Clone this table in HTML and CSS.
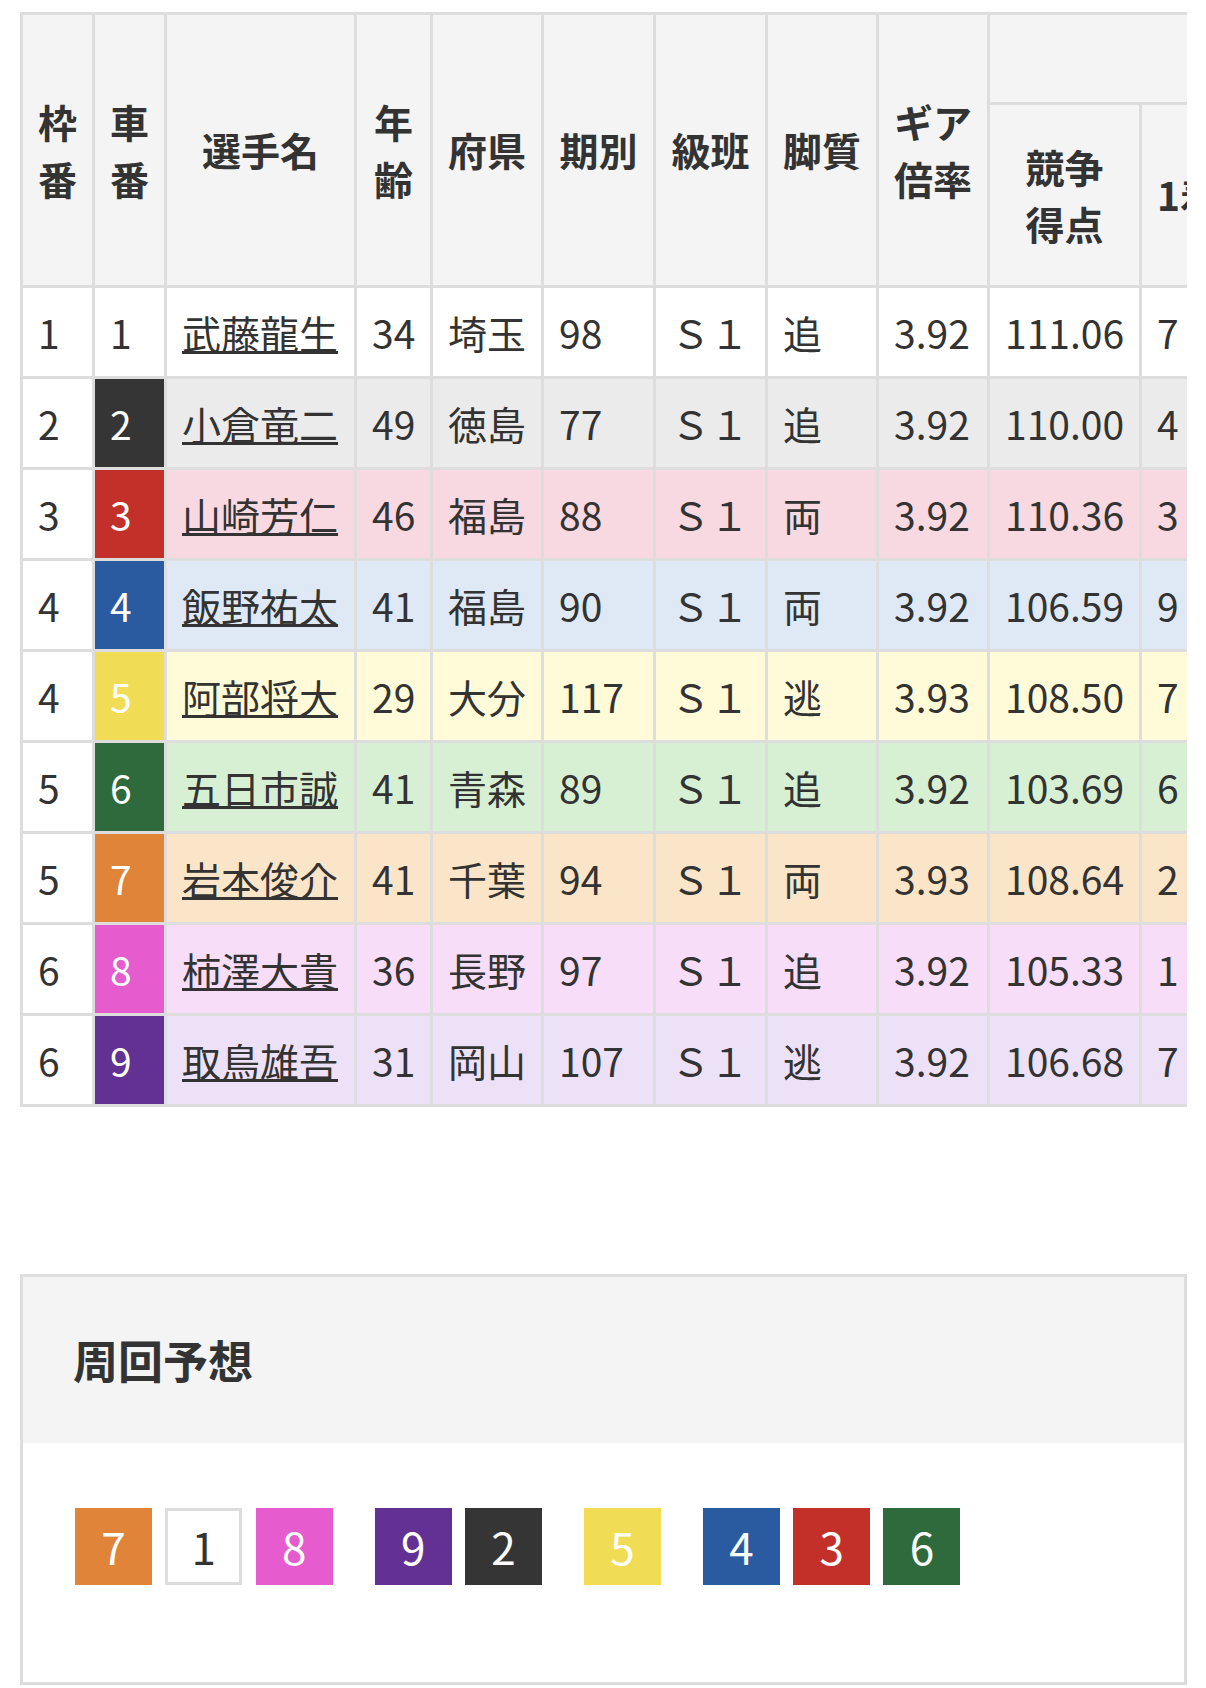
FILE: index.html
```html
<!DOCTYPE html>
<html lang="ja">
<head>
<meta charset="utf-8">
<title>出走表</title>
<link rel="stylesheet" href="styles.css">
</head>
<body>
<div class="page">
  <div class="table-wrap">
    <table class="entry">
      <colgroup>
        <col class="c-waku"><col class="c-sha"><col class="c-name"><col class="c-age"><col class="c-pref"><col class="c-ki"><col class="c-kyu"><col class="c-kyaku"><col class="c-gear"><col class="c-score"><col class="c-first">
      </colgroup>
      <thead>
        <tr class="head-top">
          <th rowspan="2">枠<br>番</th>
          <th rowspan="2">車<br>番</th>
          <th rowspan="2">選手名</th>
          <th rowspan="2">年<br>齢</th>
          <th rowspan="2">府県</th>
          <th rowspan="2">期別</th>
          <th rowspan="2">級班</th>
          <th rowspan="2">脚質</th>
          <th rowspan="2">ギア<br>倍率</th>
          <th colspan="2" class="blank"></th>
        </tr>
        <tr class="head-sub">
          <th>競争<br>得点</th>
          <th>1着</th>
        </tr>
      </thead>
      <tbody>
        <tr class="r1"><td class="waku">1</td><td class="sha s1">1</td><td class="name"><a href="#">武藤龍生</a></td><td>34</td><td>埼玉</td><td>98</td><td>Ｓ１</td><td>追</td><td>3.92</td><td>111.06</td><td>7</td></tr>
        <tr class="r2"><td class="waku">2</td><td class="sha s2">2</td><td class="name"><a href="#">小倉竜二</a></td><td>49</td><td>徳島</td><td>77</td><td>Ｓ１</td><td>追</td><td>3.92</td><td>110.00</td><td>4</td></tr>
        <tr class="r3"><td class="waku">3</td><td class="sha s3">3</td><td class="name"><a href="#">山崎芳仁</a></td><td>46</td><td>福島</td><td>88</td><td>Ｓ１</td><td>両</td><td>3.92</td><td>110.36</td><td>3</td></tr>
        <tr class="r4"><td class="waku">4</td><td class="sha s4">4</td><td class="name"><a href="#">飯野祐太</a></td><td>41</td><td>福島</td><td>90</td><td>Ｓ１</td><td>両</td><td>3.92</td><td>106.59</td><td>9</td></tr>
        <tr class="r5"><td class="waku">4</td><td class="sha s5">5</td><td class="name"><a href="#">阿部将大</a></td><td>29</td><td>大分</td><td>117</td><td>Ｓ１</td><td>逃</td><td>3.93</td><td>108.50</td><td>7</td></tr>
        <tr class="r6"><td class="waku">5</td><td class="sha s6">6</td><td class="name"><a href="#">五日市誠</a></td><td>41</td><td>青森</td><td>89</td><td>Ｓ１</td><td>追</td><td>3.92</td><td>103.69</td><td>6</td></tr>
        <tr class="r7"><td class="waku">5</td><td class="sha s7">7</td><td class="name"><a href="#">岩本俊介</a></td><td>41</td><td>千葉</td><td>94</td><td>Ｓ１</td><td>両</td><td>3.93</td><td>108.64</td><td>2</td></tr>
        <tr class="r8"><td class="waku">6</td><td class="sha s8">8</td><td class="name"><a href="#">柿澤大貴</a></td><td>36</td><td>長野</td><td>97</td><td>Ｓ１</td><td>追</td><td>3.92</td><td>105.33</td><td>1</td></tr>
        <tr class="r9"><td class="waku">6</td><td class="sha s9">9</td><td class="name"><a href="#">取鳥雄吾</a></td><td>31</td><td>岡山</td><td>107</td><td>Ｓ１</td><td>逃</td><td>3.92</td><td>106.68</td><td>7</td></tr>
      </tbody>
    </table>
  </div>

  <section class="panel">
    <div class="panel-head"><h2>周回予想</h2></div>
    <div class="panel-body">
      <div class="group"><span class="box s7">7</span><span class="box s1">1</span><span class="box s8">8</span></div>
      <div class="group"><span class="box s9">9</span><span class="box s2">2</span></div>
      <div class="group"><span class="box s5">5</span></div>
      <div class="group"><span class="box s4">4</span><span class="box s3">3</span><span class="box s6">6</span></div>
    </div>
  </section>
</div>
</body>
</html>
```

FILE: styles.css
```css
html, body {
  margin: 0;
  background: #fff;
}
body {
  font-family: "Noto Sans CJK JP", "Noto Sans", sans-serif;
  color: #333;
}
.page {
  padding: 12px 19px 0 20px;
}
.table-wrap {
  overflow-x: auto;
  scrollbar-width: none;
}
.table-wrap::-webkit-scrollbar {
  display: none;
}
.entry {
  border-collapse: separate;
  border-spacing: 3px;
  background: #dddddd;
  table-layout: fixed;
  width: 1215px;
  font-size: 39px;
  line-height: 58px;
}
.c-waku { width: 69px; }
.c-sha { width: 69px; }
.c-name { width: 187px; }
.c-age { width: 73px; }
.c-pref { width: 108px; }
.c-ki { width: 109px; }
.c-kyu { width: 109px; }
.c-kyaku { width: 108px; }
.c-gear { width: 108px; }
.c-score { width: 149px; }
.c-first { width: 90px; }

.entry th {
  background: #f4f4f4;
  font-weight: 700;
  text-align: center;
  vertical-align: middle;
  padding: 0 15px;
  white-space: nowrap;
  line-height: 57.5px;
}
.head-top .blank { height: 87px; }
.head-sub th { height: 180px; }

.entry td {
  padding: 15px;
  vertical-align: middle;
  white-space: nowrap;
  text-align: left;
}
.entry td.waku { background: #fff; }
.name a {
  color: #333;
  text-decoration: underline;
  text-decoration-thickness: 3px;
}

.r1 { background: #ffffff; }
.r2 { background: #ebebeb; }
.r3 { background: #f8d9e1; }
.r4 { background: #dfe9f5; }
.r5 { background: #fffad8; }
.r6 { background: #d7f0d3; }
.r7 { background: #fbe5c8; }
.r8 { background: #f8ddf8; }
.r9 { background: #ede1f8; }

.s1 { background: #ffffff; color: #333; }
.s2 { background: #353535; color: #fff; }
.s3 { background: #c3302a; color: #fff; }
.s4 { background: #2a5ba1; color: #fff; }
.s5 { background: #f0dc55; color: #fff; }
.s6 { background: #2f6a3c; color: #fff; }
.s7 { background: #e0843a; color: #fff; }
.s8 { background: #e65cce; color: #fff; }
.s9 { background: #633193; color: #fff; }

.panel {
  margin-top: 167px;
  border: 3px solid #dddddd;
}
.panel-head {
  background: #f4f4f4;
  height: 166px;
  box-sizing: border-box;
  padding: 0 0 0 50px;
  display: flex;
  align-items: center;
}
.panel-head h2 {
  margin: 0;
  font-size: 45px;
  font-weight: 700;
  line-height: 1.45;
}
.panel-body {
  padding: 64.5px 52px 97px;
  display: flex;
  gap: 42px;
}
.group {
  display: flex;
  gap: 13.3px;
}
.box {
  width: 77px;
  height: 77px;
  box-sizing: border-box;
  display: flex;
  align-items: center;
  justify-content: center;
  font-size: 44px;
  line-height: 1;
}
.box.s1 {
  border: 3px solid #dddddd;
}
```
